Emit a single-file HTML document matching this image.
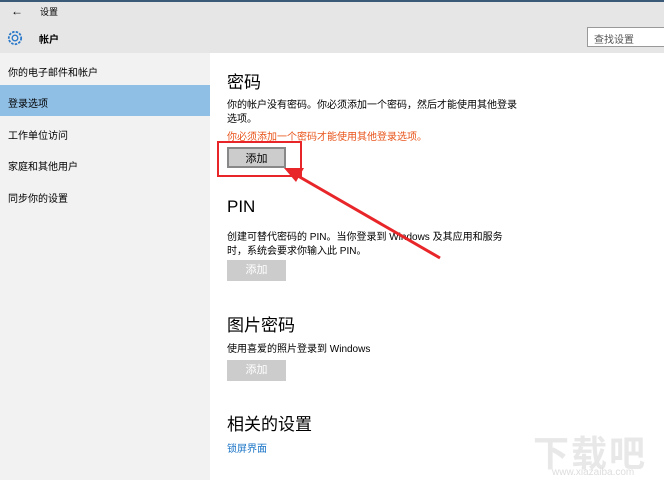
<!DOCTYPE html><html><head><meta charset="utf-8"><style>
*{margin:0;padding:0;box-sizing:border-box}
body{width:664px;height:480px;overflow:hidden;position:relative;background:#fff;font-family:"Liberation Sans","Noto Sans CJK SC",sans-serif;color:#000}
.a{position:absolute;white-space:nowrap}
.top{left:0;top:0;width:664px;height:53px;background:#e6e6e6;border-top:2px solid #3a5a78}
.side{left:0;top:53px;width:210px;height:427px;background:#f2f2f2}
.s{font-size:10px;left:8px}
.h{font-size:17px;left:227px}
.p{font-size:10px;left:227px;line-height:14px}
.btn{left:227px;width:59px;height:21px;background:#ccc;font-size:11px;text-align:center;line-height:21px;color:#fff}
</style></head><body>
<div class="a top"></div>
<div class="a" style="left:11px;top:4px;font-size:12px">←</div>
<div class="a" style="left:40px;top:5px;font-size:9px">设置</div>
<svg class="a" style="left:6px;top:29px" width="18" height="18" viewBox="0 0 16 16"><circle cx="8" cy="8" r="5.5" fill="none" stroke="#2b79c9" stroke-width="1.6" stroke-dasharray="2.2 1.1"/><circle cx="8" cy="8" r="2.5" fill="none" stroke="#2b79c9" stroke-width="1.2"/></svg>
<div class="a" style="left:39px;top:31px;font-size:10px;font-weight:bold">帐户</div>
<div class="a" style="left:587px;top:27px;width:80px;height:20px;background:#fff;border:1px solid #999;font-size:10px;color:#555;padding:3px 0 0 6px">查找设置</div>
<div class="a side"></div>
<div class="a s" style="top:64px">你的电子邮件和帐户</div>
<div class="a" style="left:0;top:85px;width:210px;height:31px;background:#90bfe6"></div>
<div class="a s" style="top:95px">登录选项</div>
<div class="a s" style="top:127px">工作单位访问</div>
<div class="a s" style="top:158px">家庭和其他用户</div>
<div class="a s" style="top:190px">同步你的设置</div>
<div class="a h" style="top:68px">密码</div>
<div class="a p" style="top:99px">你的帐户没有密码。你必须添加一个密码，然后才能使用其他登录<br>选项。</div>
<div class="a p" style="top:131px;color:#e8541a">你必须添加一个密码才能使用其他登录选项。</div>
<div class="a btn" style="top:147px;background:#ccc;border:2px solid #888;color:#000">添加</div>
<div class="a" style="left:217px;top:141px;width:85px;height:36px;border:2px solid #e8262a"></div>
<div class="a h" style="top:197px">PIN</div>
<div class="a p" style="top:231px">创建可替代密码的 PIN。当你登录到 Windows 及其应用和服务<br>时，系统会要求你输入此 PIN。</div>
<div class="a btn" style="top:260px">添加</div>
<div class="a h" style="top:311px">图片密码</div>
<div class="a p" style="top:343px">使用喜爱的照片登录到 Windows</div>
<div class="a btn" style="top:360px">添加</div>
<div class="a h" style="top:410px">相关的设置</div>
<div class="a p" style="top:443px;color:#1a74c6">锁屏界面</div>
<svg class="a" style="left:0;top:0" width="664" height="480"><line x1="440" y1="258" x2="298" y2="176" stroke="#e8262a" stroke-width="3"/><polygon points="284,168 304,168 296,182" fill="#e8262a"/></svg>
<div class="a" style="left:533px;top:425px;font-size:36px;color:#e8e8e8;font-weight:bold;letter-spacing:2px">下载吧</div>
<div class="a" style="left:552px;top:467px;font-size:10px;color:#ddd">www.xiazaiba.com</div>
</body></html>
